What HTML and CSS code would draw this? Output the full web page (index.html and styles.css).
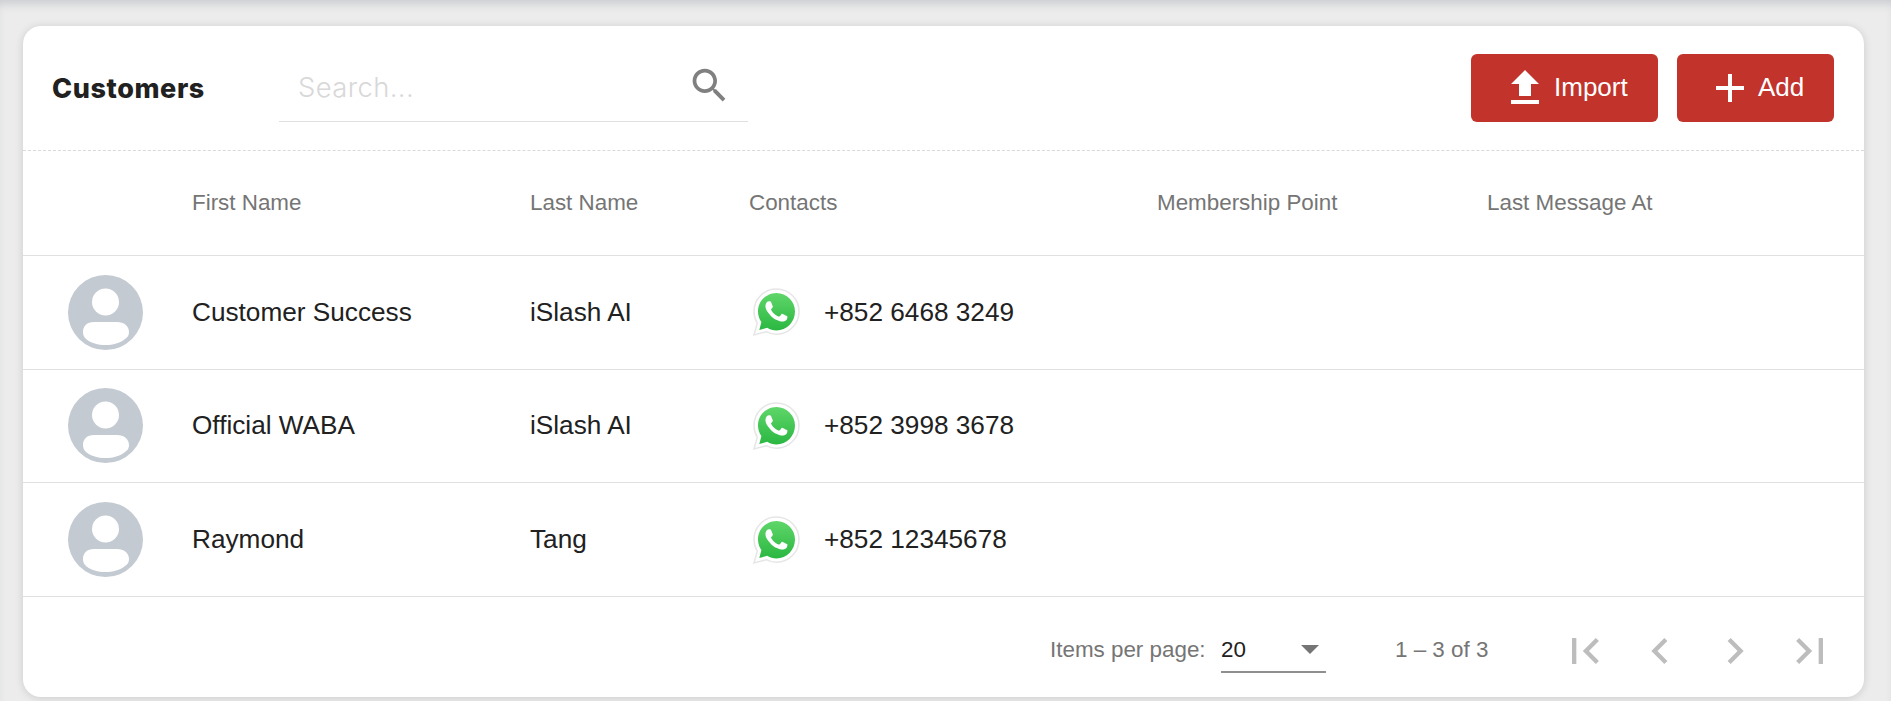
FILE: index.html
```html
<!DOCTYPE html>
<html lang="en">
<head>
<meta charset="utf-8">
<title>Customers</title>
<link rel="stylesheet" href="styles.css">
</head>
<body>
<svg class="defs" width="0" height="0" aria-hidden="true">
  <defs>
    <linearGradient id="wagrad" x1="0" y1="0" x2="0" y2="1">
      <stop offset="0" stop-color="#5fd669"/>
      <stop offset="1" stop-color="#2bb742"/>
    </linearGradient>
    <symbol id="avatar" viewBox="0 0 75 75">
      <circle cx="37.5" cy="37.5" r="37.5" fill="#c3cad2"/>
      <circle cx="37.5" cy="27" r="13.5" fill="#fff"/>
      <path d="M26 47h23c7 0 12 4 12 10 0 3-1 5-4 7-5 4-12 6-19.500 6S23 68 18 64c-2-2-3-4-3-7 0-6 4-10 11-10z" fill="#fff"/>
    </symbol>
    <symbol id="whatsapp" viewBox="0 0 50 50">
      <path d="M25.500 2C13 2 3 12 3 24.400c0 4.300 1.200 8.300 3.300 11.700L3 48l12.400-3.300c3.100 1.700 6.500 2.600 10.100 2.600C38 47.300 48 37 48 24.500S38 2 25.500 2z" fill="#fff" stroke="#e6e6e6" stroke-width="1.500"/>
      <path d="M25.500 6C15.300 6 7 14.300 7 24.400c0 3.900 1.200 7.500 3.400 10.600L8.300 43l8-2.200c2.700 1.700 5.900 2.600 9.200 2.600 10.200 0 18.500-8.400 18.500-18.900C44 14.300 35.700 6 25.500 6z" fill="url(#wagrad)"/>
      <g transform="translate(3.500 2.500) scale(1.820)">
        <path d="M17.472 14.382c-.297-.149-1.758-.867-2.03-.967-.273-.099-.471-.148-.67.15-.197.297-.767.966-.94 1.164-.173.199-.347.223-.644.075-.297-.15-1.255-.463-2.39-1.475-.883-.788-1.48-1.761-1.653-2.059-.173-.297-.018-.458.13-.606.134-.133.298-.347.446-.52.149-.174.198-.298.298-.497.099-.198.05-.371-.025-.52-.075-.149-.669-1.612-.916-2.207-.242-.579-.487-.5-.669-.51-.173-.008-.371-.01-.57-.01-.198 0-.52.074-.792.372-.272.297-1.04 1.016-1.04 2.479 0 1.462 1.065 2.875 1.213 3.074.149.198 2.096 3.2 5.077 4.487.709.306 1.262.489 1.694.625.712.227 1.36.195 1.871.118.571-.085 1.758-.719 2.006-1.413.248-.694.248-1.289.173-1.413-.074-.124-.272-.198-.57-.347z" fill="#fff"/>
      </g>
    </symbol>
  </defs>
</svg>
<main class="page">
  <section class="card">
    <header class="toolbar">
      <h1 class="title">Customers</h1>
      <div class="search">
        <span class="search-text">Search...</span>
        <svg class="search-icon" viewBox="0 0 24 24"><path d="M15.500 14h-.79l-.28-.27C15.410 12.590 16 11.110 16 9.500 16 5.910 13.090 3 9.500 3S3 5.910 3 9.500 5.910 16 9.500 16c1.610 0 3.090-.59 4.230-1.570l.27.28v.79l5 4.990L20.490 19l-4.990-5zm-6 0C7.010 14 5 11.990 5 9.500S7.010 5 9.500 5 14 7.010 14 9.500 11.990 14 9.500 14z"/></svg>
      </div>
      <div class="actions">
        <button class="btn btn-import" type="button">
          <svg class="btn-icon" viewBox="0 0 24 24"><path d="M9 16h6v-6h4l-7-7-7 7h4zm-4 2h14v2H5z"/></svg>
          <span>Import</span>
        </button>
        <button class="btn btn-add" type="button">
          <svg class="btn-icon" viewBox="0 0 24 24"><path d="M19 13h-6v6h-2v-6H5v-2h6V5h2v6h6v2z"/></svg>
          <span>Add</span>
        </button>
      </div>
    </header>

    <div class="row row-head">
      <div></div>
      <div>First Name</div>
      <div>Last Name</div>
      <div>Contacts</div>
      <div>Membership Point</div>
      <div>Last Message At</div>
    </div>

    <div class="row row-body">
      <div class="cell-avatar"><svg class="avatar"><use href="#avatar"/></svg></div>
      <div>Customer Success</div>
      <div>iSlash AI</div>
      <div class="contact"><svg class="wa"><use href="#whatsapp"/></svg><span>+852 6468 3249</span></div>
      <div></div>
      <div></div>
    </div>
    <div class="row row-body">
      <div class="cell-avatar"><svg class="avatar"><use href="#avatar"/></svg></div>
      <div>Official WABA</div>
      <div>iSlash AI</div>
      <div class="contact"><svg class="wa"><use href="#whatsapp"/></svg><span>+852 3998 3678</span></div>
      <div></div>
      <div></div>
    </div>
    <div class="row row-body">
      <div class="cell-avatar"><svg class="avatar"><use href="#avatar"/></svg></div>
      <div>Raymond</div>
      <div>Tang</div>
      <div class="contact"><svg class="wa"><use href="#whatsapp"/></svg><span>+852 12345678</span></div>
      <div></div>
      <div></div>
    </div>

    <footer class="pager">
      <span class="pager-label">Items per page:</span>
      <div class="select">
        <span class="select-value">20</span>
        <span class="select-arrow"></span>
      </div>
      <span class="pager-range">1 – 3 of 3</span>
      <div class="pager-buttons">
        <svg class="pager-icon" viewBox="0 0 24 24"><path d="M18.410 16.590L13.820 12l4.590-4.590L17 6l-6 6 6 6zM6 6h2v12H6z"/></svg>
        <svg class="pager-icon" viewBox="0 0 24 24"><path d="M15.410 7.410L14 6l-6 6 6 6 1.410-1.410L10.830 12z"/></svg>
        <svg class="pager-icon" viewBox="0 0 24 24"><path d="M10 6L8.590 7.410 13.170 12l-4.580 4.590L10 18l6-6z"/></svg>
        <svg class="pager-icon" viewBox="0 0 24 24"><path d="M5.590 7.410L10.180 12l-4.590 4.590L7 18l6-6-6-6zM16 6h2v12h-2z"/></svg>
      </div>
    </footer>
  </section>
</main>
</body>
</html>
```

FILE: styles.css
```css
* { box-sizing: border-box; }

html, body {
  margin: 0;
  height: 701px;
  overflow: hidden;
}

body {
  background: #ececec;
  font-family: "Liberation Sans", Arial, sans-serif;
  color: #212121;
}

.defs { display: block; height: 0; }

.page {
  height: 701px;
  padding: 26px 27px 0 23px;
  box-shadow: inset 0 8px 10px -4px #c9ccd0;
}

.card {
  height: 671px;
  background: #fff;
  border-radius: 18px;
  box-shadow: 0 1px 8px rgba(0, 0, 0, 0.14);
  overflow: hidden;
}

.toolbar {
  height: 125px;
  display: flex;
  align-items: center;
  padding: 0 30px 0 29px;
  border-bottom: 1px dashed #d9d9d9;
}

.title {
  width: 227px;
  margin: 0;
  font-family: Inter, "Liberation Sans", sans-serif;
  font-size: 27px;
  font-weight: 800;
  letter-spacing: 0.6px;
  color: #212121;
}

.search {
  width: 469px;
  height: 68px;
  padding: 0 16px 4px 19px;
  display: flex;
  align-items: center;
  justify-content: space-between;
  border-bottom: 1px solid #e0e0e0;
}

.search-text {
  font-family: Inter, "Liberation Sans", sans-serif;
  font-size: 27.400px;
  font-weight: 300;
  letter-spacing: 0.4px;
  color: #d8d8d8;
  margin-top: 2px;
}

.search-icon {
  width: 45px;
  height: 45px;
  fill: #808080;
}

.actions {
  margin-left: auto;
  display: flex;
  gap: 19px;
  margin-top: -1px;
}

.btn {
  height: 68px;
  border: 0;
  border-radius: 6px;
  background: #c1332b;
  color: #fff;
  font-family: "Liberation Sans", Arial, sans-serif;
  font-size: 26px;
  display: flex;
  align-items: center;
}

.btn-import { width: 187px; padding: 0 0 0 30px; gap: 5px; }
.btn-add { width: 157px; padding: 0 0 0 29px; gap: 4px; }

.btn-icon {
  width: 48px;
  height: 48px;
  fill: #fff;
  flex: none;
}

.row {
  display: grid;
  grid-template-columns: 169px 338px 219px 408px 330px 1fr;
  align-items: center;
  border-bottom: 1px solid #e0e0e0;
}

.row-head {
  height: 105px;
  font-size: 22.400px;
  color: #757575;
}

.row-body {
  height: 113.670px;
  font-size: 26.200px;
  color: #212121;
}

.cell-avatar {
  display: flex;
  padding-left: 45px;
}

.avatar {
  width: 75px;
  height: 75px;
  display: block;
}

.contact {
  display: flex;
  align-items: center;
  gap: 23px;
  white-space: nowrap;
  margin-left: 2px;
}

.wa {
  width: 50px;
  height: 50px;
  display: block;
  flex: none;
}

.pager {
  height: 100px;
  padding: 6px 0 0 1027px;
  display: flex;
  align-items: center;
  font-size: 22.400px;
  color: #757575;
}

.pager-label { width: 171px; }

.select {
  width: 105px;
  height: 46px;
  display: flex;
  align-items: center;
  justify-content: space-between;
  padding: 2px 7px 0 0;
  font-size: 22.400px;
  color: #212121;
  border-bottom: 2px solid #8f8f8f;
}

.select-arrow {
  width: 0;
  height: 0;
  border-left: 9px solid transparent;
  border-right: 9px solid transparent;
  border-top: 9px solid #757575;
}

.pager-range {
  margin-left: 69px;
  width: 164px;
}

.pager-buttons {
  display: flex;
  gap: 23px;
  margin-top: 2px;
}

.pager-icon {
  width: 52px;
  height: 52px;
  fill: #bdbdbd;
  flex: none;
}
```
